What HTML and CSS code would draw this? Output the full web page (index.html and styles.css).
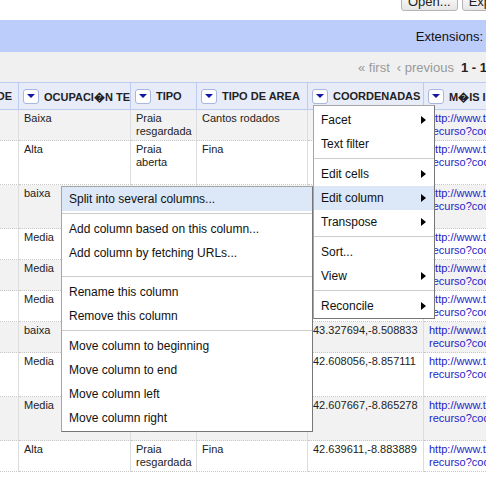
FILE: index.html
```html
<!DOCTYPE html>
<html>
<head>
<meta charset="utf-8">
<title>Refine</title>
<link rel="stylesheet" href="styles.css">
</head>
<body>
<div class="toolbar">
  <button class="btn">Open...</button>
  <button class="btn">Export</button>
</div>
<div class="ext-bar"><span>Extensions:</span></div>
<div class="pager">
  <span class="pg-off">« first</span>
  <span class="pg-off">‹ previous</span>
  <span class="pg-range">1 - 10 of 50 rows</span>
</div>
<div class="grid">
<table class="data">
  <colgroup>
    <col class="c1"><col class="c2"><col class="c3"><col class="c4"><col class="c5"><col class="c6">
  </colgroup>
  <thead>
    <tr>
      <th class="th-scroll"><div class="th-in"><span class="dd"></span><span>CAPACIDADE</span></div></th>
      <th><div class="th-in"><span class="dd"></span><span>OCUPACI&#xFFFD;N TEMPADA</span></div></th>
      <th><div class="th-in"><span class="dd"></span><span>TIPO</span></div></th>
      <th><div class="th-in"><span class="dd"></span><span>TIPO DE AREA</span></div></th>
      <th><div class="th-in"><span class="dd"></span><span>COORDENADAS</span></div></th>
      <th><div class="th-in"><span class="dd"></span><span>M&#xFFFD;IS INFORMACI&#xFFFD;N</span></div></th>
    </tr>
  </thead>
  <tbody>
    <tr><td></td><td>Baixa</td><td>Praia resgardada</td><td>Cantos rodados</td><td class="nw">42.883056,-9.271667</td><td class="nw"><a class="link">http://www.turgalicia.es/<br>recurso?codigo=1021</a></td></tr>
    <tr class="tall"><td></td><td>Alta</td><td>Praia aberta</td><td>Fina</td><td class="nw">42.881944,-9.265833</td><td class="nw"><a class="link">http://www.turgalicia.es/<br>recurso?codigo=1022</a></td></tr>
    <tr class="tall"><td></td><td>baixa</td><td>Praia aberta</td><td>Cantos rodados</td><td class="nw">43.326389,-8.511111</td><td class="nw"><a class="link">http://www.turgalicia.es/<br>recurso?codigo=1023</a></td></tr>
    <tr><td></td><td>Media</td><td>Praia aberta</td><td>Fina</td><td class="nw">43.321944,-8.519167</td><td class="nw"><a class="link">http://www.turgalicia.es/<br>recurso?codigo=1024</a></td></tr>
    <tr><td></td><td>Media</td><td>Praia aberta</td><td>Fina</td><td class="nw">43.318333,-8.526944</td><td class="nw"><a class="link">http://www.turgalicia.es/<br>recurso?codigo=1025</a></td></tr>
    <tr><td></td><td>Media</td><td>Praia aberta</td><td>Fina</td><td class="nw">43.331667,-8.501389</td><td class="nw"><a class="link">http://www.turgalicia.es/<br>recurso?codigo=1026</a></td></tr>
    <tr><td></td><td>baixa</td><td>Praia resgardada</td><td>Fina</td><td class="nw">43.327694,-8.508833</td><td class="nw"><a class="link">http://www.turgalicia.es/<br>recurso?codigo=1027</a></td></tr>
    <tr class="tall"><td></td><td>Media</td><td>Praia aberta</td><td>Fina</td><td class="nw">42.608056,-8.857111</td><td class="nw"><a class="link">http://www.turgalicia.es/<br>recurso?codigo=1028</a></td></tr>
    <tr class="tall"><td></td><td>Media</td><td>Praia aberta</td><td>Fina</td><td class="nw">42.607667,-8.865278</td><td class="nw"><a class="link">http://www.turgalicia.es/<br>recurso?codigo=1029</a></td></tr>
    <tr><td></td><td>Alta</td><td>Praia resgardada</td><td>Fina</td><td class="nw">42.639611,-8.883889</td><td class="nw"><a class="link">http://www.turgalicia.es/<br>recurso?codigo=1030</a></td></tr>
  </tbody>
</table>
</div>

<div class="menu menu-col">
  <div class="mi"><span>Facet</span><span class="arrow"></span></div>
  <div class="mi"><span>Text filter</span></div>
  <div class="sep"></div>
  <div class="mi"><span>Edit cells</span><span class="arrow"></span></div>
  <div class="mi on"><span>Edit column</span><span class="arrow"></span></div>
  <div class="mi"><span>Transpose</span><span class="arrow"></span></div>
  <div class="sep"></div>
  <div class="mi"><span>Sort...</span></div>
  <div class="mi"><span>View</span><span class="arrow"></span></div>
  <div class="sep"></div>
  <div class="mi"><span>Reconcile</span><span class="arrow"></span></div>
</div>

<div class="menu menu-sub">
  <div class="mi on"><span>Split into several columns...</span></div>
  <div class="sep"></div>
  <div class="mi"><span>Add column based on this column...</span></div>
  <div class="mi"><span>Add column by fetching URLs...</span></div>
  <div class="sep wide"></div>
  <div class="mi"><span>Rename this column</span></div>
  <div class="mi"><span>Remove this column</span></div>
  <div class="sep"></div>
  <div class="mi"><span>Move column to beginning</span></div>
  <div class="mi"><span>Move column to end</span></div>
  <div class="mi"><span>Move column left</span></div>
  <div class="mi"><span>Move column right</span></div>
</div>
</body>
</html>
```

FILE: styles.css
```css
html, body {
  margin: 0;
  padding: 0;
  overflow: hidden;
}
body {
  position: relative;
  width: 486px;
  height: 499px;
  font-family: "Liberation Sans", Arial, sans-serif;
  color: #222;
  background: #fff;
}

/* top toolbar */
.toolbar {
  display: flex;
  align-items: flex-end;
  gap: 4px;
  height: 20px;
  box-sizing: border-box;
  padding: 0 0 9px 401px;
}
.btn {
  flex: none;
  font: 13px/15px "Liberation Sans", Arial, sans-serif;
  color: #222;
  padding: 1px 6px;
  border: 1px solid #b5b5b5;
  border-radius: 3px;
  background: linear-gradient(#fefefe, #e6e6e6);
  white-space: nowrap;
}

/* extensions band */
.ext-bar {
  height: 32px;
  background: #bccdfc;
  display: flex;
  align-items: center;
  justify-content: flex-end;
  padding-right: 3px;
  font-size: 13px;
  color: #111;
}

/* pager */
.pager {
  height: 30px;
  background: #f0f0f0;
  display: flex;
  align-items: center;
  gap: 7px;
  padding-left: 358px;
  font-size: 13px;
  white-space: nowrap;
  overflow: hidden;
}
.pg-off { color: #999; }
.pg-range { font-weight: bold; color: #222; }

/* data grid */
.grid { overflow: hidden; }
.data {
  border-collapse: separate;
  border-spacing: 0;
  table-layout: fixed;
  width: 584px;
}
.c1 { width: 19px; }
.c2 { width: 112px; }
.c3 { width: 66px; }
.c4 { width: 111px; }
.c5 { width: 116px; }
.c6 { width: 160px; }

.data th {
  padding: 0 0 0 4px;
  background: #e8ecf9;
  border-top: 1px solid #bccbf2;
  border-bottom: 1px solid #bccbf2;
  border-right: 1px solid #bccbf2;
  text-align: left;
  overflow: hidden;
  white-space: nowrap;
  font-size: 11px;
  font-weight: bold;
  color: #222;
}
.data th.th-scroll { padding-left: 0; }
.th-in {
  display: flex;
  align-items: center;
  gap: 5px;
  height: 26px;
  overflow: hidden;
}
.th-scroll .th-in {
  justify-content: flex-end;
  padding-right: 6px;
}
.dd {
  flex: none;
  width: 16px;
  height: 15px;
  box-sizing: border-box;
  border: 1px solid #a9b7de;
  border-radius: 3px;
  background: #fff;
  display: flex;
  align-items: center;
  justify-content: center;
}
.dd::after {
  content: "";
  border-left: 4px solid transparent;
  border-right: 4px solid transparent;
  border-top: 4px solid #1414a8;
  margin-top: -1px;
}

.data td {
  padding: 2px 5px;
  vertical-align: top;
  font-size: 11px;
  line-height: 13px;
  color: #222;
  border-right: 1px solid #ddd;
  border-bottom: 1px dotted #c8c8c8;
  overflow: hidden;
  background: #fff;
}
.data tbody tr:nth-child(odd) td { background: #f2f2f2; }
.data tr.tall { height: 44px; }
.data td.nw { white-space: nowrap; }
.link { color: #2424c8; }

/* context menus */
.menu {
  position: absolute;
  box-sizing: border-box;
  background: #fff;
  border: 1px solid #a6a6a6;
  border-right-color: #777;
  border-bottom-color: #777;
  font-size: 12px;
  color: #111;
}
.menu-col {
  left: 313px;
  top: 105px;
  width: 122px;
  padding-top: 2px;
  z-index: 2;
}
.menu-sub {
  left: 61px;
  top: 186px;
  width: 252px;
  padding-bottom: 1px;
  z-index: 3;
}
.mi {
  height: 24px;
  display: flex;
  align-items: center;
  justify-content: space-between;
  padding: 0 8px 0 7px;
  white-space: nowrap;
}
.mi.on { background: #dce7f7; }
.arrow {
  flex: none;
  width: 0;
  height: 0;
  border-left: 5px solid #000;
  border-top: 4px solid transparent;
  border-bottom: 4px solid transparent;
}
.sep {
  border-top: 1px solid #ccc;
  margin: 2px 0 3px;
}
.sep.wide { margin-top: 11px; }
```
